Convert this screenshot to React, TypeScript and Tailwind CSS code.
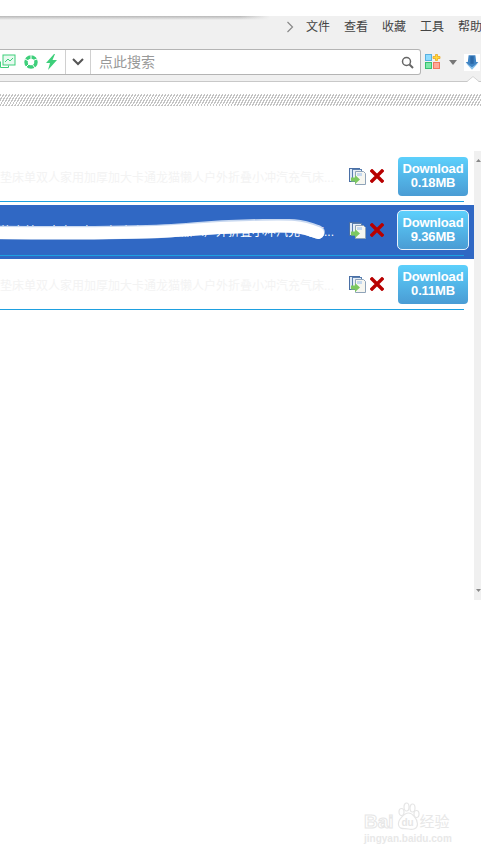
const sans = "font-['Liberation_Sans','Noto_Sans_CJK_SC',sans-serif]";

function CopyIcon() {
  return (
    <svg width="17" height="17" viewBox="0 0 17 17" className="shrink-0">
      <rect x="0.5" y="0.5" width="10" height="13" fill="#dce8f5" stroke="#4a6fa5" />
      <rect x="3.5" y="1.5" width="9" height="12" fill="#e6eef7" stroke="#5a7fb0" />
      <path d="M6.5 3.500h8l2 2v11h-10z" fill="#f6f6f0" stroke="#8fa3b8" />
      <rect x="8" y="5" width="5" height="3" fill="#c4d8ee" />
      <path d="M2 9.500h4V7l5 4.500-5 4.500v-2.500H2z" fill="#7cc860" />
    </svg>
  );
}

function XIcon() {
  return (
    <svg width="14" height="14" viewBox="0 0 14 14" className="shrink-0">
      <path d="M2 2l10 10M12 2L2 12" stroke="#b80000" strokeWidth="3.400" strokeLinecap="square" />
    </svg>
  );
}

function Row({ size, selected }: { size: string; selected?: boolean }) {
  return (
    <div className={`h-[54px] flex flex-col ${selected ? "bg-[#3068c4]" : "bg-white"}`}>
      <div className="h-[50px] flex items-center">
        <div
          className={`w-[349px] shrink-0 pr-[14px] pt-[3px] text-[12px] whitespace-nowrap overflow-hidden ${sans} ${
            selected ? "text-white" : "text-[#f3f3f3]"
          }`}
        >
          垫床单双人家用加厚加大卡通龙猫懒人户外折叠小冲汽充气床...
        </div>
        <CopyIcon />
        <div className="ml-[4px]">
          <XIcon />
        </div>
        <button
          className={`bg-gradient-to-b from-[#5cd0fc] to-[#4a9cd4] text-white font-bold text-[13px] leading-[14px] tracking-[-0.15px] ${
            selected
              ? "ml-[13px] w-[72px] h-[40px] rounded-[5px] border border-[#e8f2fb]"
              : "ml-[14px] w-[70px] h-[39px] rounded-[4px]"
          }`}
        >
          Download
          <br />
          {size}
        </button>
      </div>
      <div className="h-px w-[464px] bg-[#1ea0e0]" />
    </div>
  );
}

export default function App() {
  return (
    <div className={`relative w-[481px] h-[855px] overflow-hidden bg-white ${sans}`}>
      <div className="h-[16px] bg-white" />

      <div className="relative h-[66px] bg-[#f0f0f0] border-b border-[#c8c8c8] flex flex-col">
        <div className="absolute left-0 top-0 w-[270px] h-[4px] bg-gradient-to-b from-[#b8b8b8] to-[#f0f0f0]" />
        <div className="absolute left-[240px] top-0 w-[30px] h-[4px] bg-gradient-to-r from-[#f0f0f0]/0 to-[#f0f0f0]" />
        <div className="h-[33px] pb-[11px] flex items-center pl-[286px] gap-[14px] text-[12px] text-[#444] whitespace-nowrap">
          <svg width="8" height="12" viewBox="0 0 8 12" className="-mr-[2px] shrink-0">
            <path d="M1.500 1l5 5-5 5" fill="none" stroke="#888" strokeWidth="1.200" />
          </svg>
          <span>文件</span>
          <span>查看</span>
          <span>收藏</span>
          <span>工具</span>
          <span>帮助</span>
        </div>
        <div className="flex items-center">
          <div className="w-[421px] h-[26px] bg-white border border-l-0 border-[#b4b4b4] rounded-r-[3px] flex items-center">
            <div className="w-[66px] h-full flex items-center border-r border-[#d0d0d0]">
              <svg width="16" height="16" viewBox="0 0 16 16" className="shrink-0">
                <path d="M0.500 7.500v6h8v-2" fill="none" stroke="#3ecf7a" />
                <rect x="3" y="1" width="12" height="10" fill="#e8faf0" stroke="#3ecf7a" />
                <path d="M5 8l3-3 2 2 3-3" fill="none" stroke="#3ecf7a" />
              </svg>
              <svg width="14" height="14" viewBox="0 0 14 14" className="ml-[8px] shrink-0">
                <circle cx="7" cy="7" r="5" fill="none" stroke="#3ecf7a" strokeWidth="3.500" />
                <path d="M7 0v4M13 4l-4 1.500M11 13L8.500 9.500M2 12l3-3M1 4l3.500 2" stroke="#fff" strokeWidth="1" />
              </svg>
              <svg width="12" height="16" viewBox="0 0 12 16" className="ml-[7px] shrink-0">
                <path d="M9 0L1 9h4L3 16l9-10H7.500L10 0z" fill="#3ecf7a" />
              </svg>
            </div>
            <div className="w-[25px] h-full flex items-center justify-center border-r border-[#d0d0d0]">
              <svg width="12" height="8" viewBox="0 0 12 8">
                <path d="M1 1l5 5 5-5" fill="none" stroke="#555" strokeWidth="2" />
              </svg>
            </div>
            <div className="flex-1 pl-[8px] text-[14px] text-[#999]">点此搜索</div>
            <svg width="13" height="13" viewBox="0 0 13 13" className="mr-[6px]">
              <circle cx="5.500" cy="5.500" r="4" fill="none" stroke="#666" strokeWidth="1.500" />
              <path d="M8.500 8.500L12 12" stroke="#666" strokeWidth="2" />
            </svg>
          </div>
          <svg width="16" height="16" viewBox="0 0 16 16" className="ml-[4px] shrink-0">
            <rect x="0.500" y="0.500" width="6" height="6" fill="#8fdcff" stroke="#58b0e0" />
            <rect x="0.500" y="8.500" width="6" height="6" fill="#7ee8a8" stroke="#38c070" />
            <rect x="8.500" y="8.500" width="6" height="6" fill="#ffa898" stroke="#f07860" />
            <path d="M10.500 0.500h2v2h2.500v2h-2.500v2h-2v-2H8v-2h2.500z" fill="#ffd83c" stroke="#e8a010" strokeWidth="0.700" />
          </svg>
          <svg width="8" height="5" viewBox="0 0 8 5" className="ml-[8px] shrink-0">
            <path d="M0 0h8L4 5z" fill="#777" />
          </svg>
          <div className="ml-[7px] w-[16px] h-[17px] bg-white shrink-0">
            <svg width="16" height="17" viewBox="-1.500 0 19 17">
              <path d="M4 0h8l1 8h2.500L8 16 0.500 8H3z" fill="#3f84c4" />
              <path d="M0.500 9L8 17l7.500-8L8 14z" fill="#8cc4ec" />
              <path d="M6 1h4v9H6z" fill="#2a68a8" />
            </svg>
          </div>
        </div>
        <svg width="12" height="6" viewBox="0 0 12 6" className="absolute left-[467px] top-[60px]">
          <path d="M0 6L6 0.500 12 6z" fill="#fff" />
          <path d="M0 5.500L6 0.500l6 5" fill="none" stroke="#d4d4d4" />
        </svg>
      </div>

      <div className="mt-[12px] h-[12px] bg-[repeating-linear-gradient(120deg,#c4c4c4_0,#c4c4c4_1.200px,#ffffff_1.200px,#ffffff_2.600px)]" />

      <div className="mt-[45px] flex items-start">
        <div className="w-[474px] relative">
          <Row size="0.18MB" />
          <Row size="9.36MB" selected />
          <Row size="0.11MB" />
          <svg width="340" height="30" viewBox="0 0 340 30" className="absolute left-0 top-[68px]">
            <path d="M-5 13.500C60 14 130 14 165 12S205 8 250 7 300 6 318 13" fill="none" stroke="#c8d8f0" strokeWidth="13.500" strokeLinecap="round" />
            <path d="M-5 14C60 14.500 130 14.500 165 12.500S205 9 250 8 300 7 318 14" fill="none" stroke="#fff" strokeWidth="12" strokeLinecap="round" />
          </svg>
        </div>
        <div className="w-[7px] h-[449px] bg-[#f0f0f0] flex flex-col items-end justify-between py-[8px]">
          <svg width="5" height="3" viewBox="0 0 5 3"><path d="M0 3h5L2.500 0z" fill="#888" /></svg>
          <svg width="5" height="3" viewBox="0 0 5 3"><path d="M0 0h5L2.500 3z" fill="#888" /></svg>
        </div>
      </div>

      <div className="absolute left-[364px] top-[802px] w-[90px]">
        <div className="flex items-end h-[30px]">
          <span className="text-[19px] leading-[20px] font-bold text-white [-webkit-text-stroke:1px_#e6e6e6]">Bai</span>
          <svg width="25" height="30" viewBox="0 0 24 30" className="shrink-0 ml-[1px]">
            <g fill="none" stroke="#e6e6e6" strokeWidth="1.200">
              <ellipse cx="6" cy="10" rx="2.500" ry="3.500" />
              <ellipse cx="11" cy="5" rx="2.500" ry="4" />
              <ellipse cx="17" cy="6" rx="2.500" ry="4" />
              <ellipse cx="21" cy="12" rx="2.500" ry="3.500" />
              <path d="M13 11c4 0 9 6 9 11s-5 6-9 5-9 1-10-4 6-12 10-12z" />
            </g>
            <text x="6" y="24" fontSize="10" fontWeight="700" fill="#e6e6e6">du</text>
          </svg>
          <span className="text-[15px] leading-[20px] text-[#e8e8e8]">经验</span>
        </div>
        <div className="text-[10px] leading-[12px] font-bold whitespace-nowrap mt-[1px] text-[#e8e8e8]">jingyan.baidu.com</div>
      </div>
    </div>
  );
}
